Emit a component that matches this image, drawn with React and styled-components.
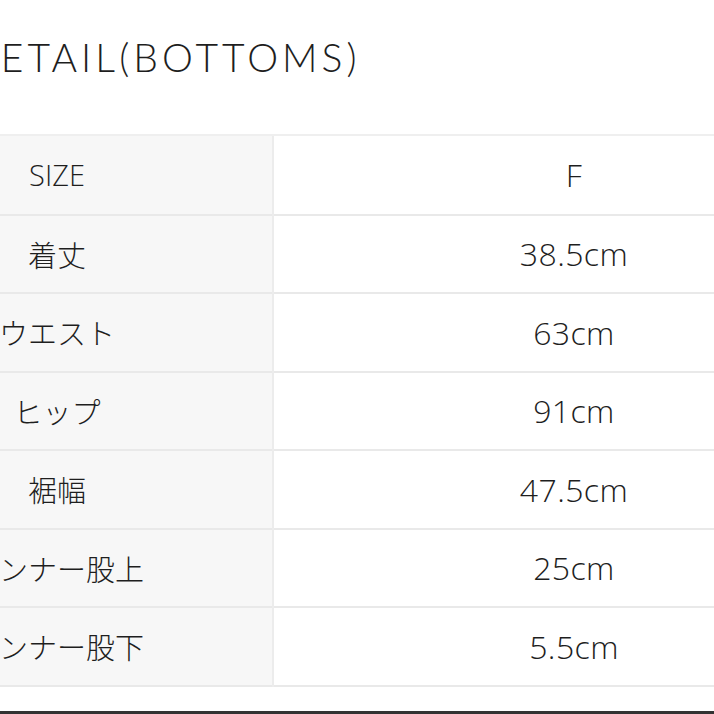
import React from 'react'
import styled, { createGlobalStyle } from 'styled-components'

const GlobalStyle = createGlobalStyle`
    html, body {
        margin: 0;
        padding: 0;
        background: #ffffff;
        overflow: hidden;
    }
`

const Page = styled.div`
    width: 714px;
    height: 714px;
    overflow: hidden;
    display: flex;
    flex-direction: column;
    background: #ffffff;
`

const Title = styled.h2`
    margin: 33px 0px 0px -33px;
    height: 48px;
    font-family: Lato, 'Open Sans', sans-serif;
    font-weight: 300;
    font-size: 39px;
    line-height: 48px;
    letter-spacing: 0.105em;
    color: #1e1e1e;
    white-space: nowrap;
`

const TableWrap = styled.div`
    margin: 53px 0px 0px -158px;
    width: 1032px;
    border-top: 2px solid #efefef;
`

const SizeTable = styled.table`
    width: 100%;
    border-collapse: collapse;
    table-layout: fixed;
`

const Row = styled.tr`
    height: 78.5px;
    border-bottom: 2px solid #e9e9e9;
`

const Cell = styled.td`
    width: ${(p) => (p.$head ? '430px' : 'auto')};
    padding: 0;
    text-align: center;
    vertical-align: middle;
    background: ${(p) => (p.$head ? '#f7f7f7' : '#ffffff')};
    border-right: ${(p) => (p.$head ? '2px solid #ececec' : 'none')};
    font-family: 'Open Sans', 'Noto Sans CJK JP', sans-serif;
    font-weight: 300;
    font-size: ${(p) => (p.$head ? '29px' : '32px')};
    letter-spacing: ${(p) => (p.$head ? '0px' : '0.4px')};
    color: #1e1e1e;
    white-space: nowrap;
`

const BottomBar = styled.div`
    margin-top: auto;
    height: 3px;
    background: #333333;
`

const rows = [
    ['SIZE', 'F'],
    ['着丈', '38.5cm'],
    ['ウエスト', '63cm'],
    ['ヒップ', '91cm'],
    ['裾幅', '47.5cm'],
    ['インナー股上', '25cm'],
    ['インナー股下', '5.5cm'],
]

export default function App() {
    return (
        <Page>
            <GlobalStyle />
            <Title>DETAIL(BOTTOMS)</Title>
            <TableWrap>
                <SizeTable>
                    <tbody>
                        {rows.map(([label, value]) => (
                            <Row key={label}>
                                <Cell $head>{label}</Cell>
                                <Cell>{value}</Cell>
                            </Row>
                        ))}
                    </tbody>
                </SizeTable>
            </TableWrap>
            <BottomBar />
        </Page>
    )
}
